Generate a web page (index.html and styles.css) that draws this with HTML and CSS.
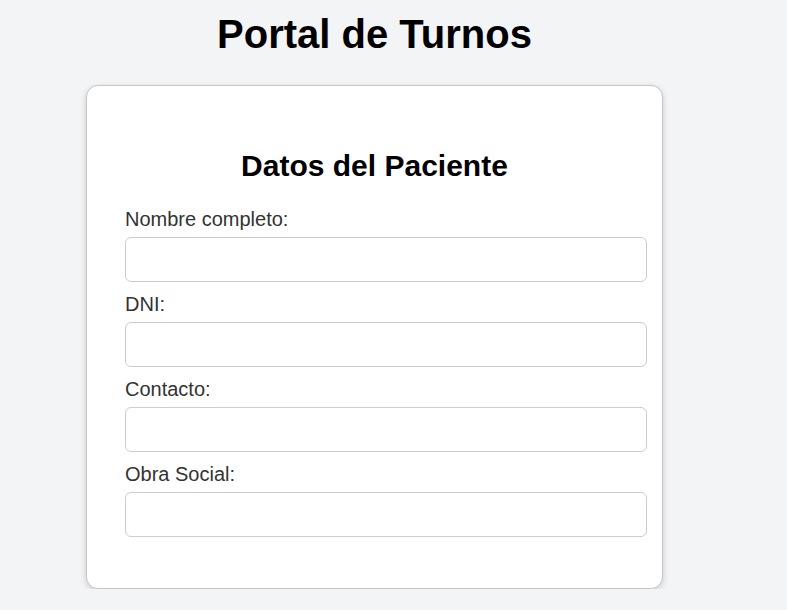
FILE: index.html
```html
<!DOCTYPE html>
<html lang="es">
<head>
<meta charset="utf-8">
<title>Portal de Turnos</title>
<link rel="stylesheet" href="styles.css">
</head>
<body>
<div class="page">
  <h1 class="title">Portal de Turnos</h1>
  <div class="card">
    <h2 class="card-title">Datos del Paciente</h2>
    <form class="form">
      <label class="label" for="nombre">Nombre completo:</label>
      <input class="input" id="nombre" type="text">
      <label class="label" for="dni">DNI:</label>
      <input class="input" id="dni" type="text">
      <label class="label" for="contacto">Contacto:</label>
      <input class="input" id="contacto" type="text">
      <label class="label" for="obra">Obra Social:</label>
      <input class="input" id="obra" type="text">
    </form>
  </div>
</div>
</body>
</html>
```
FILE: styles.css
```css
html, body {
  margin: 0;
  padding: 0;
}
body {
  background: #f3f4f6;
  font-family: "Liberation Sans", Arial, sans-serif;
  color: #000;
}
.page {
  width: 577px;
  margin-left: 86px;
  padding-top: 12px;
}
.title {
  margin: 0 0 28px;
  font-size: 40px;
  font-weight: bold;
  text-align: center;
  line-height: normal;
}
.card {
  background: #fff;
  border: 1px solid #c6c6c6;
  border-radius: 12px;
  box-shadow: 0 2px 6px rgba(0, 0, 0, 0.16);
  padding: 38px 38px 40px 38px;
}
.card-title {
  margin: 25px 0 25px;
  font-size: 30px;
  font-weight: bold;
  text-align: center;
  line-height: normal;
}
.form {
  display: flex;
  flex-direction: column;
}
.label {
  display: block;
  font-size: 20px;
  color: #333;
  margin-bottom: 6px;
  line-height: normal;
}
.input {
  display: block;
  box-sizing: border-box;
  width: calc(100% + 23px);
  height: 45px;
  margin: 0 0 11px;
  padding: 0 12px;
  border: 1px solid #ccc;
  border-radius: 6px;
  background: #fff;
  font-family: "Liberation Sans", Arial, sans-serif;
  font-size: 16px;
  outline: none;
}
```
